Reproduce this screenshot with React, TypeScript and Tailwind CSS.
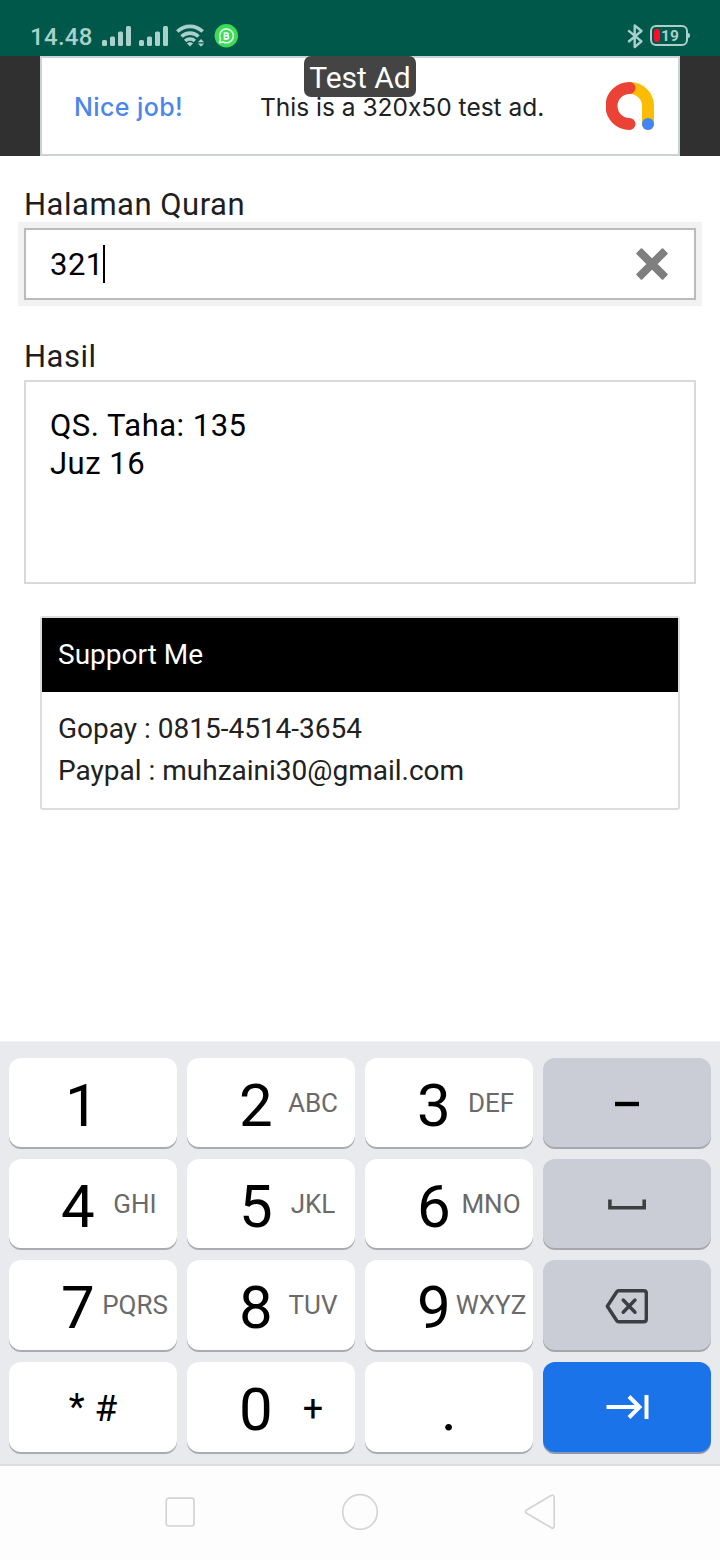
import React from "react";

function SignalBars() {
  return (
    <svg width="30" height="22" viewBox="0 0 30 22" fill="#a9d0ca">
      <rect x="0" y="14" width="5" height="6" rx="1.500" />
      <rect x="8" y="10.500" width="5" height="9.500" rx="1.500" />
      <rect x="16" y="5.500" width="5" height="14.500" rx="1.500" />
      <rect x="24" y="0" width="5" height="20" rx="1.500" />
    </svg>
  );
}

function WifiIcon() {
  return (
    <svg width="30" height="24" viewBox="0 0 30 24" fill="none" stroke="#a9d0ca" strokeWidth="3.600">
      <path d="M1.300 8.500C8.500 1.600 19.500 1.600 26.700 8.500" />
      <path d="M5.500 13.500C10.300 9 17.700 9 22.500 13.500" />
      <path d="M9.200 18C11.800 15.400 16.200 15.400 18.800 18" />
      <path d="M10.900 20.500Q14 17.500 17.100 20.500L14 23.500Z" fill="#a9d0ca" stroke="none" />
      <path d="M21.800 19.200L25 16L28.200 19.200ZM21.800 20.600L25 23.800L28.200 20.600Z" fill="#a9d0ca" stroke="none" />
    </svg>
  );
}

function WhatsAppBusinessIcon() {
  return (
    <svg width="24" height="24" viewBox="0 0 24 24" fill="none">
      <circle cx="12.300" cy="11.700" r="11.700" fill="#3ddc57" />
      <path d="M5.500 18.700L6.500 15.300A6.900 6.900 0 1 1 9.300 18Z" stroke="#e9ffed" strokeWidth="1.500" strokeLinejoin="round" />
      <path d="M10.500 9H12.800A1.400 1.400 0 0 1 12.800 11.800H10.500ZM10.500 11.800H13.100A1.550 1.550 0 0 1 13.100 14.900H10.500Z" stroke="#f4fff6" strokeWidth="1.600" />
    </svg>
  );
}

function BluetoothIcon() {
  return (
    <svg width="18" height="26" viewBox="0 0 18 26" fill="none" stroke="#a9d0ca" strokeWidth="2.400" strokeLinejoin="round">
      <path d="M1.200 7.300L14.500 18.300L7.700 24V2.500L14.500 8L1.200 19" />
    </svg>
  );
}

function AdMobLogo() {
  return (
    <svg width="50" height="50" viewBox="0 0 50 50" fill="none" strokeWidth="12" strokeLinecap="round">
      <path d="M24 7A18 18 0 0 1 42 25V43" stroke="#fbbc04" />
      <path d="M23.500 7A18 18 0 0 0 23.500 43" stroke="#ea4335" />
      <circle cx="42" cy="43" r="6" fill="#4285f4" />
    </svg>
  );
}

function StatusBar() {
  return (
    <header className="flex h-14 items-start bg-[#00584b] pr-[30px] pl-[30px]">
      <span className="mt-[25px] w-[63px] text-[24px] leading-6 font-medium tracking-[0.3px] text-[#a9d0ca]">14.48</span>
      <div className="mt-[26px] ml-[9px] flex gap-[7px]">
        <SignalBars />
        <SignalBars />
      </div>
      <div className="mt-[23px] ml-[7px]">
        <WifiIcon />
      </div>
      <div className="mt-6 ml-2">
        <WhatsAppBusinessIcon />
      </div>
      <div className="mt-[23px] ml-auto -mr-px pr-[2px]">
        <BluetoothIcon />
      </div>
      <div className="mt-[25px] ml-[4px] flex h-[21px] w-[38px] items-center rounded-[6px] border-2 border-[#a9d0ca] pl-[2px]">
        <span className="h-[13px] w-[6px] rounded-[3px] bg-[#ff0a2b]" />
        <span className="mt-[2px] ml-px text-[15.500px] leading-none font-bold text-[#a9d0ca]">19</span>
      </div>
      <span className="mt-[33px] h-[5px] w-[2px] rounded-r bg-[#a9d0ca]" />
    </header>
  );
}

function AdBanner() {
  return (
    <section className="flex h-[100px] justify-center bg-[#303030]">
      <div className="relative flex w-[640px] border-2 border-[#c9d3d5] bg-white font-['Inter',sans-serif] [font-feature-settings:'calt'_0]">
        <span className="mt-[33px] ml-8 w-[186px] text-[25px] leading-8 font-medium tracking-[0.4px] whitespace-nowrap text-[#4a86ee]">Nice job!</span>
        <span className="mt-[33px] w-[346px] text-[24.500px] leading-8 whitespace-nowrap text-[#202124]">This is a 320x50 test ad.</span>
        <div className="mt-[23px]">
          <AdMobLogo />
        </div>
        <span className="absolute top-[-2px] left-[262px] h-[41px] w-28 rounded-[7px] bg-[#444444] text-center font-['Roboto',sans-serif] text-[30px] leading-[43px] text-white">Test Ad</span>
      </div>
    </section>
  );
}

function QuranForm() {
  return (
    <section className="px-6 pt-[29px] text-[31px] tracking-[0.5px] text-[#1e1e1e]">
      <label className="block h-[43px] leading-10">Halaman Quran</label>
      <div className="flex h-[72px] items-center border-2 border-[#bbbbbb] bg-white pr-[25px] pl-6 text-black shadow-[0_0_0_6px_#f2f2f2]">
        <span className="-mr-px pt-[2px] leading-10">321</span>
        <span className="h-[38px] w-[2px] bg-black" />
        <svg className="ml-auto" width="34" height="34" viewBox="0 0 34 34" fill="#7f7f7f" stroke="#7f7f7f" strokeWidth="2" strokeLinejoin="round">
          <path d="M6.500 2.300L17 12.800L27.500 2.300L31.700 6.500L21.200 17L31.700 27.500L27.500 31.700L17 21.200L6.500 31.700L2.300 27.500L12.800 17L2.300 6.500Z" />
        </svg>
      </div>
      <label className="mt-[37px] block h-[43px] leading-10">Hasil</label>
      <div className="h-[204px] border-2 border-[#d9d9d9] pt-[25px] pl-6 leading-[38px] text-black">
        <p>QS. Taha: 135</p>
        <p>Juz 16</p>
      </div>
    </section>
  );
}

function SupportCard() {
  return (
    <section className="mx-10 mt-8 h-[194px] rounded-[3px] border-2 border-[#dddddd] text-[28px] text-[#212121]">
      <h2 className="h-[74px] bg-black pl-4 leading-[73px] text-white">Support Me</h2>
      <div className="pt-4 pl-4 leading-[42px]">
        <p>Gopay : 0815-4514-3654</p>
        <p>Paypal : muhzaini30@gmail.com</p>
      </div>
    </section>
  );
}

function DigitKey({ digit, letters }: { digit: string; letters?: string }) {
  const isPlus = letters === "+";
  return (
    <button className="grid grid-cols-2 rounded-xl bg-white shadow-[0_2px_0_#a9abb0]">
      <span className={digit === "1" ? "pt-[18px] pl-[56px] text-left text-[60px] leading-none text-black" : "pt-[18px] pl-[52px] text-left text-[60px] leading-none text-black"}>
        {digit}
      </span>
      <span className={isPlus ? "pt-[29px] text-center text-[36px] leading-none text-black" : "pt-8 text-center text-[26px] leading-none text-[#6a6a6a]"}>
        {letters}
      </span>
    </button>
  );
}

function GrayKey({ children }: { children: React.ReactNode }) {
  return <button className="flex items-center justify-center rounded-xl bg-[#cbcdd6] shadow-[0_2px_0_#a5a7ad]">{children}</button>;
}

function Keyboard() {
  return (
    <section className="h-[423px] border-t border-[#f2f3f5] bg-[#e8eaed] px-[9px] pt-4">
      <div className="grid grid-cols-4 grid-rows-[89px_89px_90px_90px] gap-x-[10px] gap-y-3">
        <DigitKey digit="1" />
        <DigitKey digit="2" letters="ABC" />
        <DigitKey digit="3" letters="DEF" />
        <GrayKey>
          <svg width="44" height="30" viewBox="0 0 44 30">
            <path d="M10 16H34" stroke="#000" strokeWidth="4.400" />
          </svg>
        </GrayKey>
        <DigitKey digit="4" letters="GHI" />
        <DigitKey digit="5" letters="JKL" />
        <DigitKey digit="6" letters="MNO" />
        <GrayKey>
          <svg width="44" height="30" viewBox="0 0 44 30" fill="none" stroke="#3c4043" strokeWidth="3.600">
            <path d="M4.900 10.500V18.800H39.200V10.500" />
          </svg>
        </GrayKey>
        <DigitKey digit="7" letters="PQRS" />
        <DigitKey digit="8" letters="TUV" />
        <DigitKey digit="9" letters="WXYZ" />
        <GrayKey>
          <svg className="mt-[2px]" width="44" height="36" viewBox="0 0 44 36" fill="none" stroke="#3c3e46" strokeWidth="3.400" strokeLinejoin="round" strokeLinecap="round">
            <path d="M13.500 2.700H38.800Q41.300 2.700 41.300 5.200V31.300Q41.300 33.800 38.800 33.800H13.500Q12.500 33.800 11.800 32.800L2.300 18.200L11.800 3.700Q12.500 2.700 13.500 2.700Z" />
            <path d="M18.200 12L30 24.200M30 12L18.200 24.200" />
          </svg>
        </GrayKey>
        <button className="flex items-start justify-center gap-[10px] rounded-xl bg-white pt-[28px] text-[37px] leading-none text-black shadow-[0_2px_0_#a9abb0]">
          <span className="-mt-[2px]">*</span>
          <span>#</span>
        </button>
        <DigitKey digit="0" letters="+" />
        <button className="rounded-xl bg-white pt-[6px] text-center text-[60px] leading-none text-black shadow-[0_2px_0_#a9abb0]">.</button>
        <button className="flex items-center justify-center rounded-xl bg-[#1a73e8] shadow-[0_2px_0_#8a98b3]">
          <svg width="44" height="30" viewBox="0 0 44 30" fill="none" stroke="#fff" strokeWidth="4">
            <path d="M1.500 15H34M24 4.500L34.500 15L24 25.500M41.500 3V27" />
          </svg>
        </button>
      </div>
    </section>
  );
}

function NavigationBar() {
  return (
    <nav className="flex h-[96px] items-start justify-center gap-[136px] border-t-2 border-[#dcdedf] bg-[#fdfdfd] pt-6">
      <svg width="44" height="44" viewBox="0 0 44 44" fill="none" stroke="#d4d4d4" strokeWidth="1.700">
        <rect x="8.200" y="8.200" width="27.800" height="27.800" rx="2.500" />
      </svg>
      <svg width="44" height="44" viewBox="0 0 44 44" fill="none" stroke="#d4d4d4" strokeWidth="1.700">
        <circle cx="22" cy="22" r="17.300" />
      </svg>
      <svg width="44" height="44" viewBox="0 0 44 44" fill="none" stroke="#d4d4d4" strokeWidth="1.700" strokeLinejoin="round">
        <path d="M8.200 20.200L33 5.600Q36.200 4.400 36.200 7.500V36Q36.200 39 33 37.600L8.200 23Q6.600 21.600 8.200 20.200Z" />
      </svg>
    </nav>
  );
}

export default function App() {
  return (
    <main className="flex h-[1560px] w-[720px] flex-col overflow-hidden bg-white font-['Roboto',sans-serif]">
      <StatusBar />
      <AdBanner />
      <QuranForm />
      <SupportCard />
      <div className="grow" />
      <Keyboard />
      <NavigationBar />
    </main>
  );
}
